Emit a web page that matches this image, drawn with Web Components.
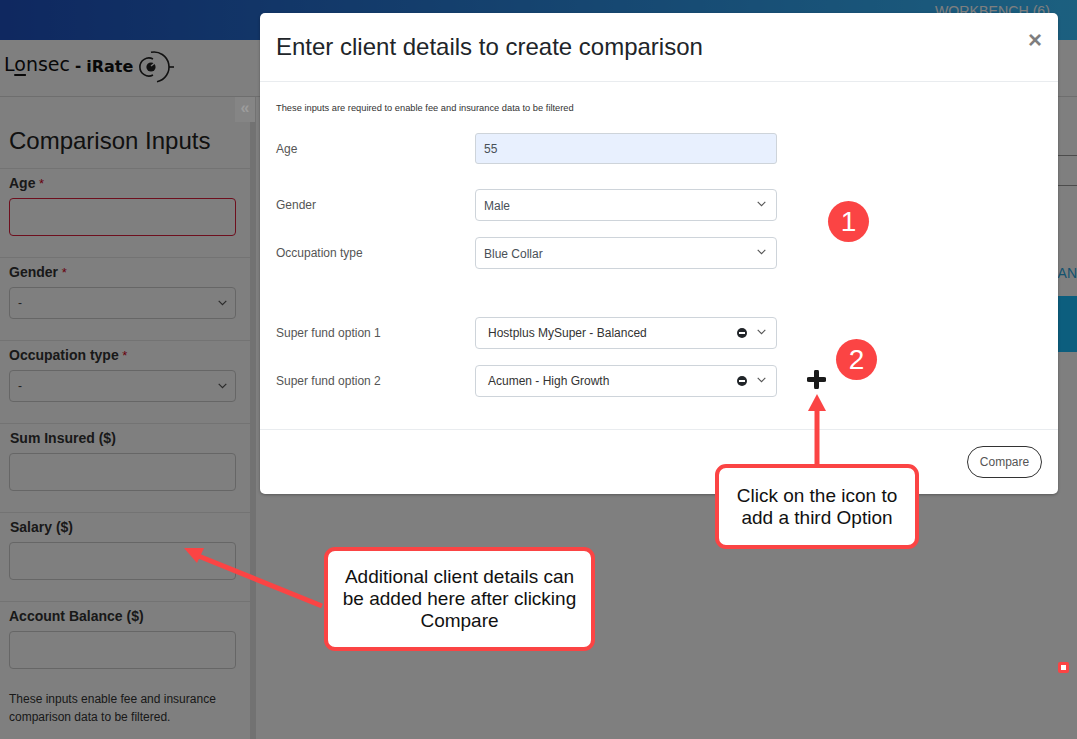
<!DOCTYPE html>
<html>
<head>
<meta charset="utf-8">
<title>Lonsec iRate</title>
<style>
  html, body { margin: 0; padding: 0; }
  body { width: 1077px; height: 739px; overflow: hidden; font-family: "Liberation Sans", Arial, sans-serif; background: #fff; }
</style>
</head>
<body>
<irate-app>
  <top-bar slot="top">WORKBENCH (6)</top-bar>
  <logo-bar slot="logo"></logo-bar>
  <input-panel slot="side" heading="Comparison Inputs">
    <side-field label="Age" required error></side-field>
    <side-field label="Gender" required kind="select" value="-"></side-field>
    <side-field label="Occupation type" required kind="select" value="-"></side-field>
    <side-field label="Sum Insured ($)" shift></side-field>
    <side-field label="Salary ($)" shift></side-field>
    <side-field label="Account Balance ($)" last></side-field>
    <p slot="note">These inputs enable fee and insurance comparison data to be filtered.</p>
  </input-panel>
  <main-area slot="main"></main-area>

  <client-modal slot="modal" heading="Enter client details to create comparison">
    <p class="lead">These inputs are required to enable fee and insurance data to be filtered</p>
    <form-row label="Age" gap="18"><text-box value="55"></text-box></form-row>
    <form-row label="Gender" gap="25"><select-box value="Male"></select-box></form-row>
    <form-row label="Occupation type" gap="16"><select-box value="Blue Collar"></select-box></form-row>
    <form-row label="Super fund option 1" gap="48"><select-box value="Hostplus MySuper - Balanced" clearable></select-box></form-row>
    <form-row label="Super fund option 2" gap="16">
      <select-box value="Acumen - High Growth" clearable></select-box>
      <svg slot="extra" width="19" height="19" viewBox="0 0 19 19"><path d="M9.5 2v15M2 9.5h15" stroke="#1a1a1a" stroke-width="5" stroke-linecap="round" fill="none"/></svg>
    </form-row>
  </client-modal>

  <help-layer slot="help">
    <num-badge style="left:828px;top:201px">1</num-badge>
    <num-badge style="left:836px;top:339px">2</num-badge>
    <call-out style="left:715px;top:464px;width:204px;height:85px">Click on the icon to<br>add a third Option</call-out>
    <call-out style="left:324px;top:547px;width:271px;height:104px">Additional client details can<br>be added here after clicking<br>Compare</call-out>
  </help-layer>
</irate-app>

<script>
class IrateApp extends HTMLElement {
  constructor() {
    super();
    this.attachShadow({ mode: 'open' });
    this.shadowRoot.innerHTML = `
      <style>
        :host { display: block; position: relative; width: 1077px; height: 739px; overflow: hidden; color: #333; }
        .work { display: grid; grid-template-columns: 256px 1fr; height: 643px; }
        .backdrop { position: absolute; inset: 0; background: rgba(0, 0, 0, .5); }
      </style>
      <slot name="top"></slot>
      <slot name="logo"></slot>
      <div class="work">
        <slot name="side"></slot>
        <slot name="main"></slot>
      </div>
      <div class="backdrop"></div>
      <slot name="modal"></slot>
      <slot name="help"></slot>
    `;
  }
}

class TopBar extends HTMLElement {
  constructor() {
    super();
    this.attachShadow({ mode: 'open' });
    this.shadowRoot.innerHTML = `
      <style>
        :host { display: flex; justify-content: flex-end; height: 40px; box-sizing: border-box; padding: 3px 27px 0 0;
                background: linear-gradient(90deg, #1e50c0, #38c0ff); color: #fff; font-size: 14.2px; line-height: 16px; }
      </style>
      <slot></slot>
    `;
  }
}

class LogoBar extends HTMLElement {
  constructor() {
    super();
    this.attachShadow({ mode: 'open' });
    this.shadowRoot.innerHTML = `
      <style>
        :host { display: flex; align-items: center; height: 57px; box-sizing: border-box; padding: 0 0 5px 4px;
                background: #fff; border-bottom: 1px solid #ddd; color: #111; }
        .lon { font: 400 19px "DejaVu Sans", sans-serif; line-height: 30px; margin-top: -3px; }
        .lon u { text-underline-offset: 3px; text-decoration-thickness: 2px; }
        .dash { font: 700 15px "DejaVu Sans", sans-serif; margin: 1px 5px 0 5px; }
        .rate { font: 700 16px "DejaVu Sans", sans-serif; margin-top: 1px; }
        svg { margin-left: 3px; margin-top: 2px; }
      </style>
      <span class="lon">L<u>o</u>nsec</span><span class="dash">-</span><span class="rate">iRate</span>
      <svg width="40" height="34" viewBox="0 0 40 34" fill="none" stroke="#222" stroke-width="1.6">
        <path d="M17 9A9 9 0 1 0 17 25"/>
        <path d="M15 2.3A15 15 0 0 1 21 31.7"/>
        <path d="M33 17h5"/>
        <circle cx="15" cy="17" r="4.6" fill="#222" stroke="none"/>
        <path d="M15 16l5-4" stroke="#fff" stroke-width="1.4"/>
      </svg>
    `;
  }
}

class InputPanel extends HTMLElement {
  constructor() {
    super();
    this.attachShadow({ mode: 'open' });
    this.shadowRoot.innerHTML = `
      <style>
        :host { display: block; position: relative; box-sizing: border-box; border-right: 6px solid #e4e4e4; }
        h2 { margin: 0; height: 71px; box-sizing: border-box; padding: 29px 0 0 9px; font: 400 24px/30px "Liberation Sans", sans-serif; color: #222; }
        /* the toggle stays lighter than the backdrop in the reference */
        .toggle { position: absolute; z-index: 1; top: 0; right: -5px; width: 20px; height: 25px; background: #858585; color: #9c9c9c;
                  font: 700 16px/22px "Liberation Sans", sans-serif; text-align: center; }
        ::slotted(p) { margin: 21px 0 0 9px; font-size: 12px; line-height: 18px; width: 220px; color: #333; }
      </style>
      <div class="toggle">«</div>
      <h2></h2>
      <slot></slot>
      <slot name="note"></slot>
    `;
  }

  connectedCallback() {
    this.shadowRoot.querySelector('h2').textContent = this.getAttribute('heading');
  }
}

class SideField extends HTMLElement {
  constructor() {
    super();
    this.attachShadow({ mode: 'open' });
    this.shadowRoot.innerHTML = `
      <style>
        :host { display: block; box-sizing: border-box; border-top: 1px solid #e6e6e6; padding: 6px 14px 21px 9px; }
        :host([last]) { padding-bottom: 0; }
        label { display: block; height: 17px; margin-bottom: 6px; font: 700 14px/17px "Liberation Sans", sans-serif; color: #333; }
        :host([shift]) label { padding-left: 1px; }
        label i { color: #d0021b; font-style: normal; font-weight: 400; font-size: 13px; }
        .box { box-sizing: border-box; height: 38px; border: 1px solid #ccc; border-radius: 4px; background: #fff; }
        :host([error]) .box { border-color: #dc1e3c; }
        .sel { display: flex; align-items: center; justify-content: space-between; height: 32px; padding: 0 8px 0 8px;
               font-size: 12px; color: #444; }
        svg { display: block; }
      </style>
      <label></label>
      <div class="box"></div>
    `;
  }

  connectedCallback() {
    const label = this.shadowRoot.querySelector('label');
    label.textContent = this.getAttribute('label');
    if (this.hasAttribute('required')) {
      const star = document.createElement('i');
      star.textContent = ' *';
      label.appendChild(star);
    }
    if (this.getAttribute('kind') === 'select') {
      const box = this.shadowRoot.querySelector('.box');
      box.classList.add('sel');
      box.innerHTML = `<span>${this.getAttribute('value')}</span>
        <svg width="9" height="6" viewBox="0 0 9 6"><path d="M.7.9l3.8 3.8L8.3.9" fill="none" stroke="#555" stroke-width="1.2"/></svg>`;
    }
  }
}

class MainArea extends HTMLElement {
  constructor() {
    super();
    this.attachShadow({ mode: 'open' });
    this.shadowRoot.innerHTML = `
      <style>
        :host { display: block; overflow: hidden; padding-left: 20px; }
        .line { height: 1px; background: #999; margin-top: 58px; }
        .line + .line { margin-top: 29px; }
        .tab { margin-top: 78px; height: 18px; text-align: right; font-size: 14px; line-height: 18px; color: #2aa6de; white-space: nowrap; }
        .band { margin-top: 14px; height: 56px; background: #18bdfd; }
      </style>
      <div class="line"></div>
      <div class="line"></div>
      <div class="tab">MEDIAN</div>
      <div class="band"></div>
    `;
  }
}

class ClientModal extends HTMLElement {
  constructor() {
    super();
    this.attachShadow({ mode: 'open' });
    this.shadowRoot.innerHTML = `
      <style>
        :host { display: block; position: absolute; left: 260px; top: 13px; width: 798px; background: #fff; border-radius: 5px;
                box-shadow: 0 1px 3px rgba(0, 0, 0, .3); }
        header { display: flex; justify-content: space-between; align-items: center; height: 69px; box-sizing: border-box;
                 padding: 0 16px; border-bottom: 1px solid #e9ecef; }
        h3 { margin: 0; font: 400 24px/30px "Liberation Sans", sans-serif; color: #212529; }
        .close { font: 700 24px/24px "Liberation Sans", sans-serif; color: #000; opacity: .5; margin-top: -14px; }
        .body { padding: 19px 16px 32px; border-bottom: 1px solid #e9ecef; }
        ::slotted(p.lead) { margin: 0; font-size: 9.3px; line-height: 14px; color: #333; }
        footer { display: flex; justify-content: flex-end; padding: 16px; }
        button { width: 75px; height: 32px; border: 1px solid #333; border-radius: 16px; background: #fff; color: #555;
                 font: 400 12px "Liberation Sans", sans-serif; padding: 0; }
      </style>
      <header><h3></h3><span class="close">×</span></header>
      <div class="body"><slot></slot></div>
      <footer><button>Compare</button></footer>
    `;
  }

  connectedCallback() {
    this.shadowRoot.querySelector('h3').textContent = this.getAttribute('heading');
  }
}

class FormRow extends HTMLElement {
  constructor() {
    super();
    this.attachShadow({ mode: 'open' });
    this.shadowRoot.innerHTML = `
      <style>
        :host { display: grid; grid-template-columns: 199px 302px auto; align-items: center; column-gap: 0; font-size: 12px; color: #555; }
        .extra { padding-left: 30px; display: flex; align-items: center; height: 0; overflow: visible; }
        ::slotted(svg) { margin-top: -3px; }
      </style>
      <span></span>
      <slot></slot>
      <div class="extra"><slot name="extra"></slot></div>
    `;
  }

  connectedCallback() {
    this.shadowRoot.querySelector('span').textContent = this.getAttribute('label');
    this.style.marginTop = this.getAttribute('gap') + 'px';
  }
}

class TextBox extends HTMLElement {
  constructor() {
    super();
    this.attachShadow({ mode: 'open' });
    this.shadowRoot.innerHTML = `
      <style>
        :host { display: flex; align-items: center; box-sizing: border-box; height: 31px; padding: 0 8px; background: #e8f0fe;
                border: 1px solid #ced4da; border-radius: 3px; font-size: 12px; color: #495057; }
      </style>
      <span></span>
    `;
  }

  connectedCallback() {
    this.shadowRoot.querySelector('span').textContent = this.getAttribute('value');
  }
}

class SelectBox extends HTMLElement {
  constructor() {
    super();
    this.attachShadow({ mode: 'open' });
    this.shadowRoot.innerHTML = `
      <style>
        :host { display: flex; align-items: center; box-sizing: border-box; height: 32px; padding: 0 10px 0 8px; background: #fff;
                border: 1px solid #ced4da; border-radius: 4px; font-size: 12px; color: #495057; }
        :host([clearable]) { padding-left: 12px; color: #333; }
        span { flex: 1; margin-top: 1px; }
        :host([clearable]) span { margin-top: -1px; }
        svg { display: block; margin-top: -3px; }
        .clear { display: none; margin-right: 10px; margin-top: -1px; }
        :host([clearable]) .clear { display: block; }
      </style>
      <span></span>
      <svg class="clear" width="10" height="10" viewBox="0 0 10 10"><circle cx="5" cy="5" r="5" fill="#212529"/><rect x="2" y="4" width="6" height="2" fill="#fff"/></svg>
      <svg width="9" height="6" viewBox="0 0 9 6"><path d="M.7.9l3.8 3.8L8.3.9" fill="none" stroke="#555" stroke-width="1.1"/></svg>
    `;
  }

  connectedCallback() {
    this.shadowRoot.querySelector('span').textContent = this.getAttribute('value');
  }
}

class HelpLayer extends HTMLElement {
  constructor() {
    super();
    this.attachShadow({ mode: 'open' });
    this.shadowRoot.innerHTML = `
      <style>
        :host { display: block; position: absolute; inset: 0; }
        svg { position: absolute; left: 0; top: 0; }
        .dot { position: absolute; left: 1058px; top: 662px; width: 11px; height: 11px; box-sizing: border-box;
               border: 3px solid #fb4444; border-radius: 2px; background: #fff; }
      </style>
      <svg width="1077" height="739" viewBox="0 0 1077 739" fill="#fb4444" stroke="#fb4444">
        <path d="M817 466V410" stroke-width="5" fill="none"/>
        <path d="M817 394l9 17h-18z" stroke="none"/>
        <path d="M322 606L196 555" stroke-width="5" fill="none"/>
        <path d="M184 548l20 0l-7 15z" stroke="none"/>
      </svg>
      <slot></slot>
      <div class="dot"></div>
    `;
  }
}

class NumBadge extends HTMLElement {
  constructor() {
    super();
    this.attachShadow({ mode: 'open' });
    this.shadowRoot.innerHTML = `
      <style>
        :host { display: flex; position: absolute; align-items: center; justify-content: center; width: 41px; height: 41px;
                border-radius: 50%; background: #fb4444; color: #fff; font: 400 28px "Liberation Sans", sans-serif; }
      </style>
      <slot></slot>
    `;
  }
}

class CallOut extends HTMLElement {
  constructor() {
    super();
    this.attachShadow({ mode: 'open' });
    this.shadowRoot.innerHTML = `
      <style>
        :host { display: flex; position: absolute; align-items: center; justify-content: center; box-sizing: border-box;
                border: 4px solid #fb4444; border-radius: 11px; background: #fff; color: #111; text-align: center;
                font: 400 19px/22px "Liberation Sans", sans-serif; }
      </style>
      <div><slot></slot></div>
    `;
  }
}

customElements.define('irate-app', IrateApp);
customElements.define('top-bar', TopBar);
customElements.define('logo-bar', LogoBar);
customElements.define('input-panel', InputPanel);
customElements.define('side-field', SideField);
customElements.define('main-area', MainArea);
customElements.define('client-modal', ClientModal);
customElements.define('form-row', FormRow);
customElements.define('text-box', TextBox);
customElements.define('select-box', SelectBox);
customElements.define('help-layer', HelpLayer);
customElements.define('num-badge', NumBadge);
customElements.define('call-out', CallOut);
</script>
</body>
</html>
